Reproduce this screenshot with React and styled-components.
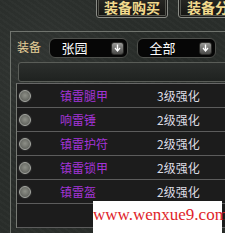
import React from "react";
import styled, { createGlobalStyle } from "styled-components";

const Global = createGlobalStyle`
  html, body { margin: 0; padding: 0; }
  body {
    width: 225px; height: 233px; overflow: hidden;
    background-color: #2a2e2b;
    background-image:
      radial-gradient(circle at 20% 30%, rgba(255,255,255,0.04) 0, transparent 40%),
      radial-gradient(circle at 70% 80%, rgba(0,0,0,0.15) 0, transparent 45%),
      repeating-linear-gradient(35deg, rgba(255,255,255,0.015) 0 2px, rgba(0,0,0,0.03) 2px 5px);
    font-family: "Noto Sans CJK SC", "Noto Sans", sans-serif;
  }
`;

const Page = styled.div`
  position: relative;
  width: 225px;
  height: 233px;
  overflow: hidden;
`;

const TopBar = styled.div`
  display: flex;
  gap: 10px;
  padding-left: 96px;
  margin-top: -4px;
  height: 22px;
`;

const TopButton = styled.div`
  flex: none;
  width: 72px;
  height: 22px;
  box-sizing: border-box;
  border: 1px solid #8a8c86;
  border-radius: 3px;
  box-shadow: inset 0 0 0 1px #1a1a18, inset 0 0 0 2px #55564f;
  background: linear-gradient(#2a2a26, #141412);
  color: #f2d98c;
  font-weight: bold;
  font-size: 14px;
  line-height: 20px;
  white-space: nowrap;
  overflow: hidden;
  padding-left: ${p => p.$pad || 0}px;
  text-align: ${p => p.$align || "center"};
`;

const Panel = styled.div`
  margin-top: 13px;
  margin-left: 10px;
  width: 240px;
  height: 220px;
  border-top: 1px solid #70746e;
  border-left: 1px solid #70746e;
  box-sizing: border-box;
  padding: 6px 0 0 6px;
`;

const FilterRow = styled.div`
  display: flex;
  align-items: center;
  height: 20px;
`;

const Label = styled.div`
  color: #e6cf98;
  font-size: 12px;
  width: 32px;
  line-height: 20px;
  margin-top: -3px;
`;

const Select = styled.div`
  flex: none;
  width: 79px;
  height: 20px;
  box-sizing: border-box;
  margin-right: 9px;
  border: 1px solid #4e504c;
  border-radius: 6px;
  background: #060606;
  display: flex;
  align-items: center;
  color: #ffffff;
  font-size: 13px;
`;

const SelectText = styled.span`
  flex: 1;
  text-align: center;
  padding-right: 12px;
  line-height: 18px;
`;

const ArrowBox = styled.span`
  width: 13px;
  height: 13px;
  margin-right: 3px;
  border-radius: 3px;
  background: linear-gradient(#9a9a98, #4a4a48);
  border: 1px solid #2a2a28;
  box-sizing: border-box;
  display: flex;
  align-items: center;
  justify-content: center;
`;

const HeaderBar = styled.div`
  margin-top: 4px;
  margin-left: 1px;
  height: 20px;
  box-sizing: border-box;
  border: 1px solid #5a5d58;
  border-radius: 3px 0 0 3px;
  background: linear-gradient(#2c2f2d, #1f2220);
`;

const List = styled.div`
  margin-top: 1px;
  margin-left: -1px;
  border-left: 1px solid #777a74;
  border-top: 1px solid #666;
  background: #1c1c1c;
`;

const Row = styled.div`
  display: flex;
  align-items: center;
  height: 23px;
  border-bottom: 1px solid #5c5c5c;
`;

const Radio = styled.span`
  flex: none;
  width: 12px;
  height: 12px;
  margin-left: 2px;
  border-radius: 50%;
  box-sizing: border-box;
  border: 1px solid #a8aaa4;
  background: radial-gradient(circle at 50% 45%, #8e9088 0, #6a6c66 60%, #4a4c48 100%);
  box-shadow: 0 0 0 1px #2a2a2a;
`;

const Name = styled.span`
  margin-left: 29px;
  width: 97px;
  color: #a434d8;
  font-size: 12px;
  line-height: 23px;
`;

const Level = styled.span`
  color: #dcdce4;
  font-size: 12px;
  line-height: 23px;
`;

const Watermark = styled.div`
  position: absolute;
  left: 93px;
  top: 201px;
  width: 129px;
  height: 32px;
  background: #ffffff;
  color: #e0242a;
  font-family: "Liberation Serif", "Times New Roman", serif;
  font-size: 17px;
  line-height: 28px;
  text-align: center;
  white-space: nowrap;
`;

const Arrow = () => (
  <svg width="7" height="8" viewBox="0 0 7 8">
    <path d="M3.5 0.5 V6" stroke="#fff" strokeWidth="1.4" />
    <path d="M1 4 L3.5 7 L6 4" stroke="#fff" strokeWidth="1.3" fill="none" />
  </svg>
);

const items = [
  ["镇雷腿甲", "3级强化"],
  ["响雷锤", "2级强化"],
  ["镇雷护符", "2级强化"],
  ["镇雷锁甲", "2级强化"],
  ["镇雷盔", "2级强化"],
  ["", ""],
];

export default function App() {
  return (
    <Page>
      <Global />
      <TopBar>
        <TopButton>装备购买</TopButton>
        <TopButton $align="left" $pad={8}>装备分类</TopButton>
      </TopBar>
      <Panel>
        <FilterRow>
          <Label>装备</Label>
          <Select>
            <SelectText>张园</SelectText>
            <ArrowBox><Arrow /></ArrowBox>
          </Select>
          <Select>
            <SelectText>全部</SelectText>
            <ArrowBox><Arrow /></ArrowBox>
          </Select>
        </FilterRow>
        <HeaderBar />
        <List>
          {items.map(([n, l], i) => (
            <Row key={i}>
              {n ? <Radio /> : null}
              {n ? <Name>{n}</Name> : null}
              {l ? <Level>{l}</Level> : null}
            </Row>
          ))}
        </List>
      </Panel>
      <Watermark>www.wenxue9.com</Watermark>
    </Page>
  );
}
